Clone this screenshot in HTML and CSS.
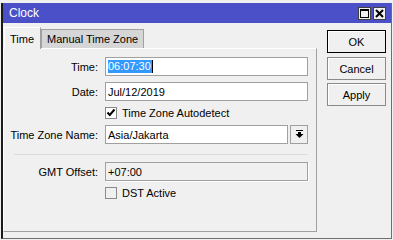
FILE: index.html
```html
<!DOCTYPE html>
<html>
<head>
<meta charset="utf-8">
<link rel="stylesheet" href="styles.css">
</head>
<body>
<div class="window">
  <div class="titlebar">
    <span class="title">Clock</span>
    <div class="tb-buttons">
      <span class="tb-btn"><svg width="11" height="11" viewBox="0 0 11 11"><rect x="1.5" y="1.5" width="8" height="8" fill="none" stroke="#000" stroke-width="1"/><rect x="1" y="1" width="9" height="2" fill="#000"/></svg></span>
      <span class="tb-btn"><svg width="11" height="11" viewBox="0 0 11 11"><path d="M2 2 L9 9 M9 2 L2 9" stroke="#000" stroke-width="2"/></svg></span>
    </div>
  </div>
  <div class="content">
    <div class="left">
      <div class="tabs">
        <div class="tab active">Time</div>
        <div class="tab">Manual Time Zone</div>
      </div>
      <div class="panel">
        <div class="row r-time">
          <span class="label">Time:</span>
          <span class="field"><span class="sel">06:07:30</span><span class="caret"></span></span>
        </div>
        <div class="row r-date">
          <span class="label">Date:</span>
          <span class="field">Jul/12/2019</span>
        </div>
        <div class="row r-check">
          <span class="label"></span>
          <span class="check-wrap"><span class="checkbox"><svg width="10" height="10" viewBox="0 0 10 10"><path d="M1.5 4.5 L3.8 7 L8.5 1.5" fill="none" stroke="#000" stroke-width="2"/></svg></span>Time Zone Autodetect</span>
        </div>
        <div class="row r-tz">
          <span class="label">Time Zone Name:</span>
          <span class="combo">
            <span class="field tzfield">Asia/Jakarta</span>
            <span class="drop"><svg width="9" height="9" viewBox="0 0 9 9"><rect x="1" y="0" width="7" height="1" fill="#000"/><rect x="3" y="2" width="3" height="2" fill="#000"/><path d="M0.5 4 L8.5 4 L4.5 8 Z" fill="#000"/></svg></span>
          </span>
        </div>
        <div class="sep"></div>
        <div class="row r-gmt">
          <span class="label">GMT Offset:</span>
          <span class="field disabled">+07:00</span>
        </div>
        <div class="row r-dst">
          <span class="label"></span>
          <span class="check-wrap"><span class="checkbox off"></span>DST Active</span>
        </div>
      </div>
    </div>
    <div class="right">
      <div class="btn default">OK</div>
      <div class="btn">Cancel</div>
      <div class="btn">Apply</div>
    </div>
  </div>
</div>
</body>
</html>
```

FILE: styles.css
```css
html, body {
  margin: 0;
  padding: 0;
}
body {
  width: 393px;
  height: 240px;
  overflow: hidden;
  background: #f0f0f0;
  font-family: "Liberation Sans", Arial, sans-serif;
  font-size: 11px;
  color: #000;
}
.window {
  margin: 3px 0 0 1px;
  width: 391px;
  height: 236px;
  box-sizing: border-box;
  border-left: 2px solid #1a1a1a;
  border-right: 1px solid #6e6e6e;
  border-bottom: 1px solid #6e6e6e;
  background: #f0f0f0;
  display: flex;
  flex-direction: column;
}
.titlebar {
  height: 20px;
  background: #4b50c8;
  display: flex;
  align-items: center;
  justify-content: space-between;
  padding: 0 5px 0 6px;
}
.title {
  color: #fff;
  font-size: 12px;
}
.tb-buttons {
  display: flex;
  gap: 2px;
}
.tb-btn {
  width: 13px;
  height: 13px;
  box-sizing: border-box;
  background: #f0f0f0;
  border: 1px solid #404040;
  display: flex;
  align-items: center;
  justify-content: center;
}
.tb-btn svg { display: block; }
.content {
  display: flex;
  padding-top: 4px;
}
.left {
  width: 314px;
  display: flex;
  flex-direction: column;
}
.tabs {
  display: flex;
  align-items: flex-end;
  height: 21px;
  padding-left: 1px;
}
.tab {
  box-sizing: border-box;
  height: 19px;
  padding: 0 5px;
  display: flex;
  align-items: center;
  background: #d6d6d6;
  border: 1px solid #a0a0a0;
  border-bottom: none;
  font-size: 11px;
}
.tab.active {
  height: 22px;
  margin-bottom: -1px;
  background: #f0f0f0;
  border-top: 1px solid #fff;
  border-left: 1px solid #fff;
  border-right: 1px solid #a0a0a0;
  padding: 0 6px 0 5px;
  position: relative;
  z-index: 1;
}
.panel {
  height: 184px;
  box-sizing: border-box;
  border-top: 1px solid #fff;
  border-left: 1px solid #fff;
  border-right: 1px solid #a0a0a0;
  border-bottom: 1px solid #a0a0a0;
  padding-top: 8px;
  display: flex;
  flex-direction: column;
}
.row {
  display: flex;
  align-items: center;
}
.label {
  width: 94px;
  text-align: right;
  margin-right: 7px;
}
.field {
  width: 203px;
  height: 19px;
  box-sizing: border-box;
  border: 1px solid #a0a0a0;
  background: #fff;
  display: flex;
  align-items: center;
  padding-left: 2px;
}
.sel {
  background: #3399ff;
  color: #fff;
  line-height: 13px;
  padding: 0 1px 0 0;
}
.caret {
  width: 1px;
  height: 13px;
  background: #000;
}
.r-date { margin-top: 6px; }
.r-check { margin-top: 6px; height: 12px; }
.r-tz { margin-top: 6px; }
.r-gmt { margin-top: 7px; }
.r-dst { margin-top: 6px; height: 12px; }
.check-wrap {
  display: flex;
  align-items: center;
}
.checkbox {
  width: 12px;
  height: 12px;
  box-sizing: border-box;
  border: 1px solid #8a8a8a;
  background: #fff;
  margin-right: 5px;
  display: flex;
  align-items: center;
  justify-content: center;
}
.checkbox svg { display: block; }
.checkbox.off { background: #f0f0f0; }
.combo {
  display: flex;
  gap: 2px;
}
.tzfield { width: 183px; }
.drop {
  width: 18px;
  height: 19px;
  box-sizing: border-box;
  border: 1px solid #a0a0a0;
  background: #f0f0f0;
  display: flex;
  align-items: center;
  justify-content: center;
}
.drop svg { display: block; }
.sep {
  margin: 10px 0 0 10px;
  width: 294px;
  height: 1px;
  background: #dcdcdc;
}
.field.disabled {
  background: #f0f0f0;
  box-shadow: 1px 1px 0 #fff;
}
.right {
  margin-left: 10px;
  padding-top: 3px;
  display: flex;
  flex-direction: column;
  gap: 3px;
}
.btn {
  width: 59px;
  height: 23px;
  box-sizing: border-box;
  border: 1px solid #8a8a8a;
  box-shadow: inset 1px 1px 0 #fff;
  background: #f0f0f0;
  display: flex;
  align-items: center;
  justify-content: center;
  font-size: 11px;
}
.btn.default {
  border: 1px solid #000;
  margin-bottom: 1px;
}
```
